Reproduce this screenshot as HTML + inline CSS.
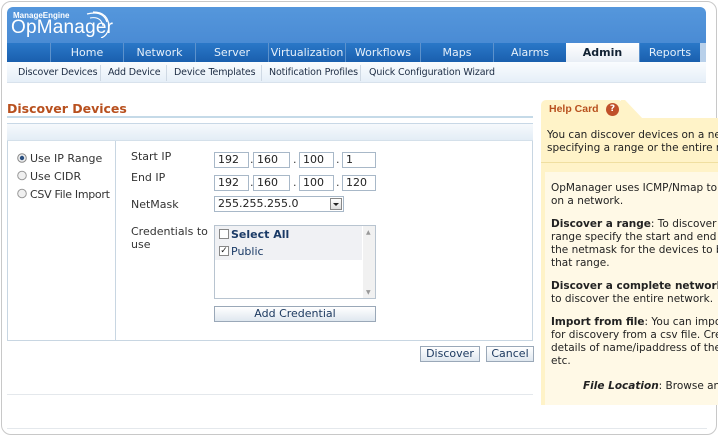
<!DOCTYPE html>
<html><head><style>
*{margin:0;padding:0;box-sizing:border-box}
body{width:718px;height:436px;background:#fff;font-family:"DejaVu Sans","Liberation Sans",sans-serif;font-size:11px;position:relative;overflow:hidden;color:#222}
.a{position:absolute}
.frame{left:1px;top:1px;width:716px;height:434px;border:1px solid #c8c8c8;border-radius:10px}
.hdr{left:7px;top:7px;width:699px;height:36px;background:linear-gradient(#5597dc,#4a8bd4);border-radius:6px 6px 0 0}
.nav{left:7px;top:43px;width:699px;height:19px;background:linear-gradient(#2a78c8,#1a5fae)}
.tab{position:absolute;top:0;height:19px;color:#e6f0fa;font-size:11px;text-align:center;line-height:19px;border-left:1px solid #5d92cc}
.sub{left:7px;top:62px;width:699px;height:21px;background:linear-gradient(#fafcfe,#e6eff8);border-bottom:1px solid #d8e2ec}
.si{position:absolute;top:0;line-height:21px;font-size:9.5px;letter-spacing:-0.15px;color:#1c2c44;white-space:nowrap}
.sep{position:absolute;top:3px;width:1px;height:16px;background:#cfd9e4}
.inp{position:absolute;height:16px;border:1px solid #a8b8c8;background:#fff;font-size:11px;padding-left:3px;line-height:14px}
.lbl{position:absolute;font-size:11px;color:#333;white-space:nowrap}
.btn{position:absolute;height:16px;border:1px solid #9aa8b8;background:linear-gradient(#fff,#dfe7ef);font-size:11px;color:#1d3a60;text-align:center;line-height:14px}
.help{color:#222;font-size:10.5px;line-height:13px;white-space:nowrap}
.help p{margin-bottom:10px}
</style></head><body>
<div class="a frame"></div>
<div class="a hdr"></div>
<div class="a" style="left:13px;top:11px;color:#fff;font-size:8px;font-weight:bold;font-family:'Liberation Sans',sans-serif">ManageEngine</div>
<div class="a" style="left:11px;top:17px;color:#fff;font-size:19px;font-family:'Liberation Sans',sans-serif;letter-spacing:0.2px">OpManager</div>
<svg class="a" style="left:85px;top:8px" width="28" height="30"><path d="M2 6 Q18 2 22 14" stroke="#fff" stroke-width="1.2" fill="none"/><path d="M5 10 Q16 8 18 18" stroke="#fff" stroke-width="1" fill="none"/><path d="M8 4 Q24 4 24 20 Q22 28 16 30" stroke="#fff" stroke-width="1.2" fill="none"/></svg>
<div class="a nav">
<div class="tab" style="left:43px;width:73px">Home</div>
<div class="tab" style="left:116px;width:72px">Network</div>
<div class="tab" style="left:188px;width:73px">Server</div>
<div class="tab" style="left:261px;width:77px">Virtualization</div>
<div class="tab" style="left:338px;width:75px">Workflows</div>
<div class="tab" style="left:413px;width:73px">Maps</div>
<div class="tab" style="left:486px;width:73px">Alarms</div>
<div class="tab" style="left:559px;width:73px;background:linear-gradient(#fff,#e8eef5);color:#123;font-weight:bold;border:none">Admin</div>
<div class="tab" style="left:632px;width:61px">Reports</div>
<div class="tab" style="left:693px;width:6px;background:#b8d0ea;border:none"></div>
</div>
<div class="a sub">
<div class="si" style="left:11px">Discover Devices</div>
<div class="sep" style="left:93px"></div>
<div class="si" style="left:101px">Add Device</div>
<div class="sep" style="left:159px"></div>
<div class="si" style="left:167px">Device Templates</div>
<div class="sep" style="left:254px"></div>
<div class="si" style="left:262px">Notification Profiles</div>
<div class="sep" style="left:353px"></div>
<div class="si" style="left:362px">Quick Configuration Wizard</div>
</div>
<div class="a" style="left:7px;top:101px;color:#b8501e;font-weight:bold;font-size:12.5px">Discover Devices</div>
<div class="a" style="left:7px;top:116px;width:526px;height:2px;background:#c5dae8"></div>
<div class="a" style="left:7px;top:123px;width:526px;height:218px;border:1px solid #c8d6e2;border-top:none"></div>
<div class="a" style="left:7px;top:123px;width:526px;height:18px;background:linear-gradient(#f6f9fc,#e3edf6);border-top:1px solid #c8d8e6;border-bottom:1px solid #d4e0ea"></div>
<div class="a" style="left:115px;top:141px;width:1px;height:200px;background:#c8d6e2"></div>
<svg class="a" style="left:17px;top:153px" width="10" height="50"><circle cx="5" cy="5" r="4.3" fill="#f0f0f0" stroke="#888"/><circle cx="5" cy="5" r="2.2" fill="#2a4f80"/><circle cx="5" cy="22.5" r="4.3" fill="#f0f0f0" stroke="#999"/><circle cx="5" cy="40.5" r="4.3" fill="#f0f0f0" stroke="#999"/></svg>
<div class="lbl" style="left:30px;top:152px">Use IP Range</div>
<div class="lbl" style="left:30px;top:170px">Use CIDR</div>
<div class="lbl" style="left:30px;top:188px;letter-spacing:-0.3px">CSV File Import</div>
<div class="lbl" style="left:131px;top:150px">Start IP</div>
<div class="lbl" style="left:131px;top:171px">End IP</div>
<div class="lbl" style="left:131px;top:198px">NetMask</div>
<div class="lbl" style="left:131px;top:225px;line-height:13px">Credentials to<br>use</div>
<div class="inp" style="left:214px;top:152px;width:35px">192</div><div class="lbl" style="left:250px;top:153px">.</div>
<div class="inp" style="left:253px;top:152px;width:37px">160</div><div class="lbl" style="left:293px;top:153px">.</div>
<div class="inp" style="left:299px;top:152px;width:35px">100</div><div class="lbl" style="left:336px;top:153px">.</div>
<div class="inp" style="left:342px;top:152px;width:34px">1</div>
<div class="inp" style="left:214px;top:175px;width:35px">192</div><div class="lbl" style="left:250px;top:176px">.</div>
<div class="inp" style="left:253px;top:175px;width:37px">160</div><div class="lbl" style="left:293px;top:176px">.</div>
<div class="inp" style="left:299px;top:175px;width:35px">100</div><div class="lbl" style="left:336px;top:176px">.</div>
<div class="inp" style="left:342px;top:175px;width:34px">120</div>
<div class="inp" style="left:214px;top:196px;width:130px;padding-left:3px">255.255.255.0</div>
<div class="a" style="left:330px;top:198px;width:12px;height:12px;border:1px solid #888;background:linear-gradient(#fff,#ddd)"></div>
<svg class="a" style="left:332px;top:202px" width="8" height="5"><path d="M1 1 L7 1 L4 4Z" fill="#222"/></svg>
<div class="a" style="left:214px;top:225px;width:162px;height:74px;border:1px solid #b8c4d0;background:#fff"></div>
<div class="a" style="left:215px;top:226px;width:147px;height:34px;background:#f0f1f4"></div>
<div class="a" style="left:363px;top:226px;width:12px;height:72px;background:#f1f1f1"></div>
<div class="a" style="left:366px;top:229px;font-size:6px;color:#999">▲</div>
<div class="a" style="left:366px;top:289px;font-size:6px;color:#999">▼</div>
<div class="a" style="left:219px;top:229px;width:10px;height:10px;border:1px solid #888;background:#fff"></div>
<div class="a" style="left:231px;top:228px;font-weight:bold;color:#1a3a66">Select All</div>
<div class="a" style="left:219px;top:246px;width:10px;height:10px;border:1px solid #888;background:#fff;font-size:9px;line-height:8px;text-align:center">✓</div>
<div class="a" style="left:231px;top:245px;color:#1a3a66">Public</div>
<div class="btn" style="left:214px;top:306px;width:162px">Add Credential</div>
<div class="btn" style="left:420px;top:346px;width:60px">Discover</div>
<div class="btn" style="left:486px;top:346px;width:48px">Cancel</div>
<div class="a" style="left:7px;top:394px;width:526px;height:1px;background:#e4e8ec"></div>
<div class="a" style="left:7px;top:428px;width:700px;height:1px;background:#e4e8ec"></div>
<!-- Help card -->
<div class="a" style="left:541px;top:100px;width:177px;height:336px;overflow:hidden">
<div class="a" style="left:0;top:18px;width:177px;height:287px;background:#fff3c8"></div>
<div class="a" style="left:0;top:0;width:82px;height:19px;background:#fff3c8;border-radius:5px 5px 0 0"></div>
<svg class="a" style="left:80px;top:0" width="24" height="19"><path d="M0 0 L4 0 L22 19 L0 19Z" fill="#fff3c8"/></svg>
<div class="a" style="left:8px;top:3px;color:#b8501e;font-weight:bold;font-size:10.5px;font-family:'Liberation Sans',sans-serif">Help Card</div>
<div class="a" style="left:65px;top:3px;width:13px;height:13px;border-radius:50%;background:#c0502a;color:#fff;font-size:9px;font-weight:bold;text-align:center;line-height:13px">?</div>
<div class="a help" style="left:6px;top:29px">You can discover devices on a network by<br>specifying a range or the entire network</div>
<div class="a" style="left:0;top:62px;width:177px;height:1px;background:#f0dfa0"></div>
<div class="a" style="left:4px;top:72px;width:173px;height:233px;background:#fff9e6"></div>
<div class="a help" style="left:10px;top:82px">
<p>OpManager uses ICMP/Nmap to discover<br>on a network.</p>
<p><b>Discover a range</b>: To discover devices<br>range specify the start and end IP and<br>the netmask for the devices to be in<br>that range.</p>
<p><b>Discover a complete network</b>: Use CIDR<br>to discover the entire network.</p>
<p style="margin-bottom:12px"><b>Import from file</b>: You can import<br>for discovery from a csv file. Create<br>details of name/ipaddress of the devices<br>etc.</p>
<p style="padding-left:32px"><b><i>File Location</i></b>: Browse and</p>
</div>
</div>
</body></html>
